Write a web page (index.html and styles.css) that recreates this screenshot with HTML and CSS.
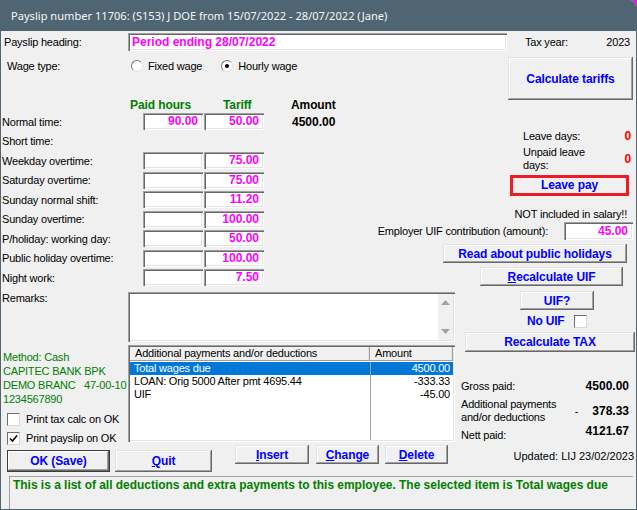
FILE: index.html
```html
<!DOCTYPE html>
<html>
<head>
  <meta charset="UTF-8">
  <title>Payslip 11706</title>
  <link rel="stylesheet" href="styles.css">
</head>
<body>
  <div class="window">
    <div class="titlebar">Payslip number 11706: (S153) J DOE from 15/07/2022 - 28/07/2022 (Jane)</div>

    <div class="client">
      <div class="heading-row">
        <span class="heading-label">Payslip heading:</span>
        <div class="field heading-field">Period ending 28/07/2022</div>
        <span class="tax-label">Tax year:</span>
        <span class="tax-value">2023</span>
      </div>

      <div class="upper">
        <div class="rates">
          <div class="wage-type">
            <span class="wage-label">Wage type:</span>
            <span class="radio"></span><span class="radio-text">Fixed wage</span>
            <span class="radio checked"></span><span class="radio-text">Hourly wage</span>
          </div>

          <div class="rate-head">
            <span class="head-hours">Paid hours</span>
            <span class="head-tariff">Tariff</span>
            <span class="head-amount">Amount</span>
          </div>

          <div class="rate-row">
            <span class="rate-label">Normal time:</span>
            <span class="field num">90.00</span>
            <span class="field num">50.00</span>
            <span class="rate-amount">4500.00</span>
          </div>
          <div class="rate-row">
            <span class="rate-label">Short time:</span>
          </div>
          <div class="rate-row">
            <span class="rate-label">Weekday overtime:</span>
            <span class="field num"></span>
            <span class="field num">75.00</span>
          </div>
          <div class="rate-row">
            <span class="rate-label">Saturday overtime:</span>
            <span class="field num"></span>
            <span class="field num">75.00</span>
          </div>
          <div class="rate-row">
            <span class="rate-label">Sunday normal shift:</span>
            <span class="field num"></span>
            <span class="field num">11.20</span>
          </div>
          <div class="rate-row">
            <span class="rate-label">Sunday overtime:</span>
            <span class="field num"></span>
            <span class="field num">100.00</span>
          </div>
          <div class="rate-row">
            <span class="rate-label">P/holiday: working day:</span>
            <span class="field num"></span>
            <span class="field num">50.00</span>
          </div>
          <div class="rate-row">
            <span class="rate-label">Public holiday overtime:</span>
            <span class="field num"></span>
            <span class="field num">100.00</span>
          </div>
          <div class="rate-row">
            <span class="rate-label">Night work:</span>
            <span class="field num"></span>
            <span class="field num">7.50</span>
          </div>
        </div>

        <div class="side">
          <button class="btn calc-btn">Calculate tariffs</button>
          <div class="leave">
            <span class="leave-label">Leave days:</span>
            <span class="leave-value">0</span>
            <span class="leave-label unpaid">Unpaid leave<br>days:</span>
            <span class="leave-value unpaid">0</span>
          </div>
          <div class="leave-frame">Leave pay</div>
          <div class="note">NOT included in salary!!</div>
          <div class="uif-row">
            <span class="uif-label">Employer UIF contribution (amount):</span>
            <span class="field num uif-field">45.00</span>
          </div>
          <button class="btn holidays-btn">Read about public holidays</button>
          <button class="btn recalc-uif-btn"><u>R</u>ecalculate UIF</button>
        </div>
      </div>

      <div class="lower">
        <div class="info">
          <div class="remarks-label">Remarks:</div>
          <div class="bank">
            <div>Method: Cash</div>
            <div>CAPITEC BANK BPK</div>
            <div><span class="branch">DEMO BRANC</span><span class="branch-code">47-00-10</span></div>
            <div>1234567890</div>
          </div>
          <div class="checks">
            <div class="check-row"><span class="checkbox"></span>Print tax calc on OK</div>
            <div class="check-row"><span class="checkbox checked">
              <svg width="9" height="9" viewBox="0 0 9 9"><path d="M1 4.5 L3.5 7 L8 1.5" fill="none" stroke="#000" stroke-width="1.6"/></svg>
            </span>Print payslip on OK</div>
          </div>
        </div>

        <div class="middle">
          <div class="field remarks">
            <div class="scrollbar">
              <svg width="9" height="5" viewBox="0 0 9 5"><path d="M0 5 L4.5 0 L9 5 Z" fill="#a3a3a3"/></svg>
              <svg width="9" height="5" viewBox="0 0 9 5"><path d="M0 0 L4.5 5 L9 0 Z" fill="#a3a3a3"/></svg>
            </div>
          </div>
          <div class="field list">
            <div class="list-head">
              <span class="col-desc">Additional payments and/or deductions</span>
              <span class="col-amount">Amount</span>
            </div>
            <div class="list-body">
              <div class="list-row selected"><span class="col-desc">Total wages due</span><span class="col-amount">4500.00</span></div>
              <div class="list-row"><span class="col-desc">LOAN: Orig 5000 After pmt 4695.44</span><span class="col-amount">-333.33</span></div>
              <div class="list-row"><span class="col-desc">UIF</span><span class="col-amount">-45.00</span></div>
              <div class="list-row filler"><span class="col-desc"></span><span class="col-amount"></span></div>
            </div>
          </div>
        </div>

        <div class="totals">
          <button class="btn uifq-btn">UIF?</button>
          <div class="no-uif">No UIF <span class="checkbox"></span></div>
          <button class="btn recalc-tax-btn">Recalculate TAX</button>

          <div class="sum-row gross">
            <span class="sum-label">Gross paid:</span>
            <span class="sum-value">4500.00</span>
          </div>
          <div class="sum-row extra">
            <span class="sum-label">Additional payments<br>and/or deductions</span>
            <span class="sum-dash">-</span>
            <span class="sum-value">378.33</span>
          </div>
          <div class="sum-row nett">
            <span class="sum-label">Nett paid:</span>
            <span class="sum-value">4121.67</span>
          </div>
        </div>
      </div>

      <div class="actions">
        <button class="btn ok-btn">OK (Save)</button>
        <button class="btn quit-btn"><u>Q</u>uit</button>
        <button class="btn insert-btn"><u>I</u>nsert</button>
        <button class="btn change-btn"><u>C</u>hange</button>
        <button class="btn delete-btn"><u>D</u>elete</button>
        <span class="updated">Updated: LIJ 23/02/2023</span>
      </div>

      <div class="status">This is a list of all deductions and extra payments to this employee. The selected item is Total wages due</div>
    </div>
  </div>
</body>
</html>
```

FILE: styles.css
```css
html, body {
  margin: 0;
  padding: 0;
  background: #ff00ff;
}

body {
  font-family: "Liberation Sans", Arial, sans-serif;
  font-size: 11px;
  letter-spacing: -0.2px;
  color: #000;
}

.window {
  width: 637px;
  height: 510px;
  box-sizing: border-box;
  background: #f0f0f0;
  border: 1px solid #506572;
  border-top: none;
  border-top-right-radius: 7px;
  overflow: hidden;
}

.titlebar {
  height: 31px;
  margin: 0 -1px;
  padding-left: 11px;
  background: #506572;
  color: #f4f7f8;
  font-family: "Noto Sans", sans-serif;
  font-size: 11.1px;
  letter-spacing: 0;
  line-height: 31px;
  white-space: nowrap;
}

/* shared controls */

.field {
  display: block;
  box-sizing: border-box;
  background: #fff;
  box-shadow: inset 1px 1px #a0a0a0, inset 2px 2px #696969, inset -1px -1px #fff, inset -2px -2px #e3e3e3;
}

.num {
  height: 17px;
  width: 60px;
  padding: 0 5px 0 0;
  text-align: right;
  color: #ff00ff;
  font-weight: bold;
  font-size: 12px;
  letter-spacing: 0;
  line-height: 17px;
}

.btn {
  display: block;
  box-sizing: border-box;
  padding: 0;
  border: none;
  background: #f0f0f0;
  color: #0000ff;
  font-family: "Liberation Sans", Arial, sans-serif;
  font-weight: bold;
  font-size: 12px;
  letter-spacing: -0.1px;
  box-shadow: inset -1px -1px #696969, inset 1px 1px #e3e3e3, inset -2px -2px #a0a0a0, inset 2px 2px #fff;
}

.radio {
  display: inline-block;
  box-sizing: border-box;
  width: 12px;
  height: 12px;
  border-radius: 50%;
  background: #fff;
  border: 1px solid;
  border-color: #7a7a7a #e3e3e3 #e3e3e3 #7a7a7a;
  position: relative;
}

.radio.checked::after {
  content: "";
  position: absolute;
  left: 3px;
  top: 3px;
  width: 4px;
  height: 4px;
  border-radius: 50%;
  background: #000;
}

.checkbox {
  display: inline-flex;
  align-items: center;
  justify-content: center;
  box-sizing: border-box;
  width: 13px;
  height: 13px;
  background: #fff;
  border: 1px solid;
  border-color: #6e6e6e #d8d8d8 #d8d8d8 #6e6e6e;
}

/* heading row */

.heading-row {
  display: flex;
  align-items: center;
  height: 21px;
}

.heading-label {
  width: 124px;
  padding-left: 3px;
}

.heading-field {
  width: 379px;
  height: 18px;
  padding-left: 4px;
  color: #ff00ff;
  font-weight: bold;
  font-size: 12px;
  letter-spacing: 0;
  line-height: 18px;
}

.tax-label {
  margin-left: 18px;
}

.tax-value {
  flex: 1;
  text-align: right;
  padding-right: 6px;
}

/* upper part */

.upper {
  display: grid;
  grid-template-columns: 375px minmax(0, 1fr);
}

.wage-type {
  display: flex;
  align-items: center;
  height: 18px;
  margin-top: 5px;
}

.wage-label {
  width: 124px;
  padding-left: 6px;
}

.radio-text {
  margin-left: 5px;
  margin-right: 19px;
}

.rate-head {
  display: flex;
  height: 14px;
  margin-top: 23px;
  padding-left: 129px;
  font-weight: bold;
  font-size: 12px;
  letter-spacing: -0.1px;
  line-height: 14px;
}

.head-hours {
  width: 93px;
  color: #008000;
}

.head-tariff {
  width: 68px;
  color: #008000;
}

.rate-row {
  display: flex;
  align-items: center;
  height: 19.5px;
  padding-left: 1px;
}

.rate-label {
  width: 141px;
}

.rate-row .num + .num {
  margin-left: 1px;
}

.rate-amount {
  margin-left: 28px;
  font-weight: bold;
  font-size: 12px;
  letter-spacing: 0;
}

/* right-hand side */

.side {
  display: flex;
  flex-direction: column;
}

.calc-btn {
  margin: 5px 0 0 132px;
  width: 125px;
  height: 43px;
}

.leave {
  display: grid;
  grid-template-columns: 100px 1fr;
  margin: 30px 0 0 147px;
  line-height: 13px;
}

.leave-value {
  text-align: right;
  padding-right: 5px;
  color: #ff0000;
  font-weight: bold;
  font-size: 12px;
}

.leave-label.unpaid,
.leave-value.unpaid {
  margin-top: 3px;
  align-self: center;
}

.leave-frame {
  box-sizing: border-box;
  margin: 3px 0 0 134px;
  width: 119px;
  height: 21px;
  border: 3px solid #ed1c24;
  color: #0000ff;
  font-weight: bold;
  font-size: 12px;
  letter-spacing: -0.1px;
  line-height: 15px;
  text-align: center;
}

.note {
  margin-top: 12px;
  padding-right: 9px;
  text-align: right;
  line-height: 13px;
}

.uif-row {
  display: flex;
  align-items: center;
  justify-content: flex-end;
  height: 18px;
  margin-top: 1px;
  padding-right: 3px;
}

.uif-label {
  white-space: nowrap;
}

.uif-field {
  flex: none;
  margin-left: 16px;
  width: 69px;
  height: 18px;
  line-height: 18px;
}

.holidays-btn {
  margin: 4px 0 0 67px;
  width: 184px;
  height: 19px;
}

.recalc-uif-btn {
  margin: 4px 0 0 104px;
  width: 143px;
  height: 19px;
}

/* lower part */

.lower {
  display: grid;
  grid-template-columns: 127px 327px minmax(0, 1fr);
}

.remarks-label {
  margin-top: 4px;
  padding-left: 1px;
  line-height: 13px;
}

.bank {
  margin-top: 45px;
  padding-left: 2px;
  color: #008000;
  line-height: 14px;
  white-space: nowrap;
}

.branch {
  display: inline-block;
  width: 71px;
  vertical-align: top;
}

.branch-code {
  margin-left: 10px;
}

.checks {
  margin-top: 7px;
  padding-left: 6px;
}

.check-row {
  display: flex;
  align-items: center;
  height: 13px;
  gap: 6px;
}

.check-row + .check-row {
  margin-top: 6px;
}

.remarks {
  position: relative;
  margin-top: 4.5px;
  height: 50px;
}

.scrollbar {
  position: absolute;
  right: 2px;
  top: 2px;
  bottom: 2px;
  width: 15px;
  display: flex;
  flex-direction: column;
  justify-content: space-between;
  align-items: center;
  padding: 6px 0;
  box-sizing: border-box;
  background: #f0f0f0;
}

.list {
  margin-top: 3px;
  height: 97px;
  padding: 2px;
  display: flex;
  flex-direction: column;
  line-height: 13px;
}

.list-head {
  display: flex;
  height: 14px;
  background: #f0f0f0;
  line-height: 13px;
}

.list-head span {
  box-sizing: border-box;
  padding-left: 5px;
  box-shadow: inset -1px -1px #a0a0a0, inset -2px 0 #e3e3e3;
}

.col-desc {
  width: 240px;
  white-space: nowrap;
}

.col-amount {
  flex: 1;
}

.list-body {
  flex: 1;
  display: flex;
  flex-direction: column;
  padding-top: 1px;
}

.list-row {
  display: flex;
  height: 13px;
}

.list-row .col-desc {
  padding-left: 4px;
  box-sizing: border-box;
}

.list-row .col-amount {
  text-align: right;
  padding-right: 3px;
  border-left: 1px solid #a0a0a0;
}

.list-row.filler {
  flex: 1;
}

.list-row.selected {
  background: #0078d7;
  color: #fff;
}

.totals {
  display: flex;
  flex-direction: column;
  padding-right: 7px;
}

.uifq-btn {
  margin: 3.5px 0 0 65px;
  width: 74px;
  height: 19px;
}

.no-uif {
  display: flex;
  align-items: center;
  gap: 10px;
  height: 12px;
  margin: 5px 0 0 72px;
  color: #0000ff;
  font-weight: bold;
  font-size: 12px;
}

.recalc-tax-btn {
  margin: 5px 0 0 10px;
  width: 170px;
  height: 20px;
}

.sum-row {
  display: flex;
  padding-left: 6px;
  line-height: 13px;
}

.sum-label {
  flex: 1;
}

.sum-value {
  font-weight: bold;
  font-size: 12px;
  letter-spacing: 0;
}

.gross {
  margin-top: 28px;
}

.extra {
  margin-top: 5px;
  align-items: center;
}

.sum-dash {
  margin-right: 14px;
}

.nett {
  margin-top: 1px;
  height: 17px;
}

.nett .sum-label {
  align-self: flex-end;
}

/* bottom */

.actions {
  display: flex;
  align-items: flex-start;
  height: 27px;
  margin-top: 0.5px;
  padding-left: 6px;
}

.ok-btn {
  margin-top: 4.5px;
  width: 103px;
  height: 22px;
  box-shadow: inset 0 0 0 1px #3c3c3c, inset -2px -2px #696969, inset 2px 2px #fff, inset -3px -3px #a0a0a0;
}

.quit-btn {
  margin: 4.5px 0 0 5px;
  width: 97px;
  height: 22px;
}

.insert-btn {
  margin-left: 23px;
  width: 74px;
  height: 19px;
}

.change-btn {
  margin-left: 7px;
  width: 63px;
  height: 19px;
}

.delete-btn {
  margin-left: 6px;
  width: 63px;
  height: 19px;
}

.updated {
  margin: 5px 0 0 auto;
  padding-right: 2px;
  letter-spacing: 0;
  line-height: 13px;
}

.status {
  box-sizing: border-box;
  margin: 3.5px 0 0 8px;
  width: 624px;
  height: 33px;
  padding: 2px 0 0 3px;
  border-top: 1px solid #a0a0a0;
  border-left: 1px solid #a0a0a0;
  color: #008000;
  font-weight: bold;
  font-size: 11.94px;
  letter-spacing: 0;
  line-height: 13px;
  white-space: nowrap;
}
```
